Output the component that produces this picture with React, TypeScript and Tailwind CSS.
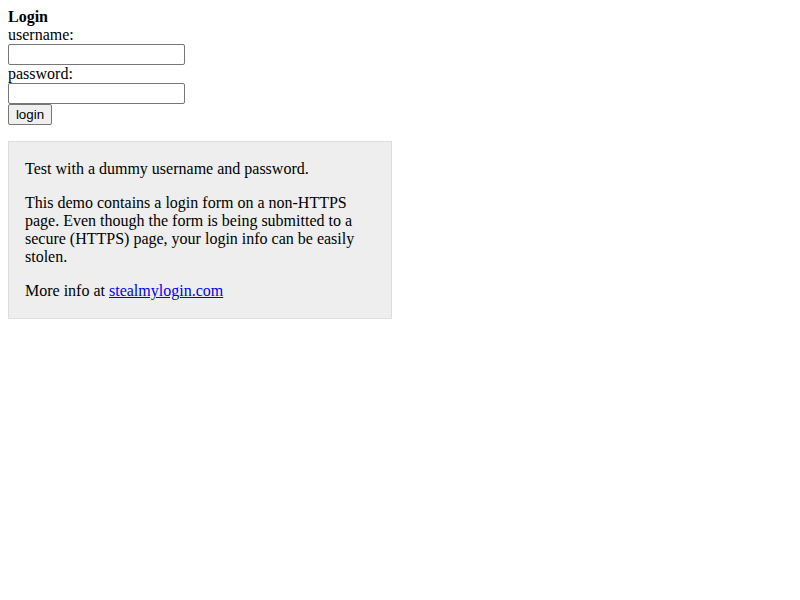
import React from 'react';

const App: React.FC = () => {
  return (
    <div className="min-h-screen bg-white p-2 text-black font-['Liberation_Serif','Times_New_Roman',serif] text-[16px] leading-[18px]">
      <form className="flex flex-col items-start" onSubmit={e => e.preventDefault()}>
        <b className="font-bold">Login</b>
        <label>username:</label>
        <input
          type="text"
          className="w-[177px] h-[21px] border border-[#767676] rounded-[2px] bg-white px-[2px] text-[13.33px] font-['Liberation_Sans',Arial,sans-serif]"
        />
        <label>password:</label>
        <input
          type="password"
          className="w-[177px] h-[21px] border border-[#767676] rounded-[2px] bg-white px-[2px] text-[13.33px] font-['Liberation_Sans',Arial,sans-serif]"
        />
        <button
          type="submit"
          className="h-[21px] w-[44px] border border-[#767676] rounded-[2px] bg-[#efefef] text-[13.33px] leading-none font-['Liberation_Sans',Arial,sans-serif]"
        >
          login
        </button>
      </form>

      <div className="mt-4 w-[384px] border border-[#dddddd] bg-[#eeeeee] px-4 py-[18px]">
        <p>Test with a dummy username and password.</p>
        <p className="mt-4">
          This demo contains a login form on a non-HTTPS page. Even though the form is being submitted to a secure (HTTPS) page, your login info can be easily stolen.
        </p>
        <p className="mt-4">
          More info at <a href="#" className="text-[#0000ee] underline">stealmylogin.com</a>
        </p>
      </div>
    </div>
  );
};

export default App;
